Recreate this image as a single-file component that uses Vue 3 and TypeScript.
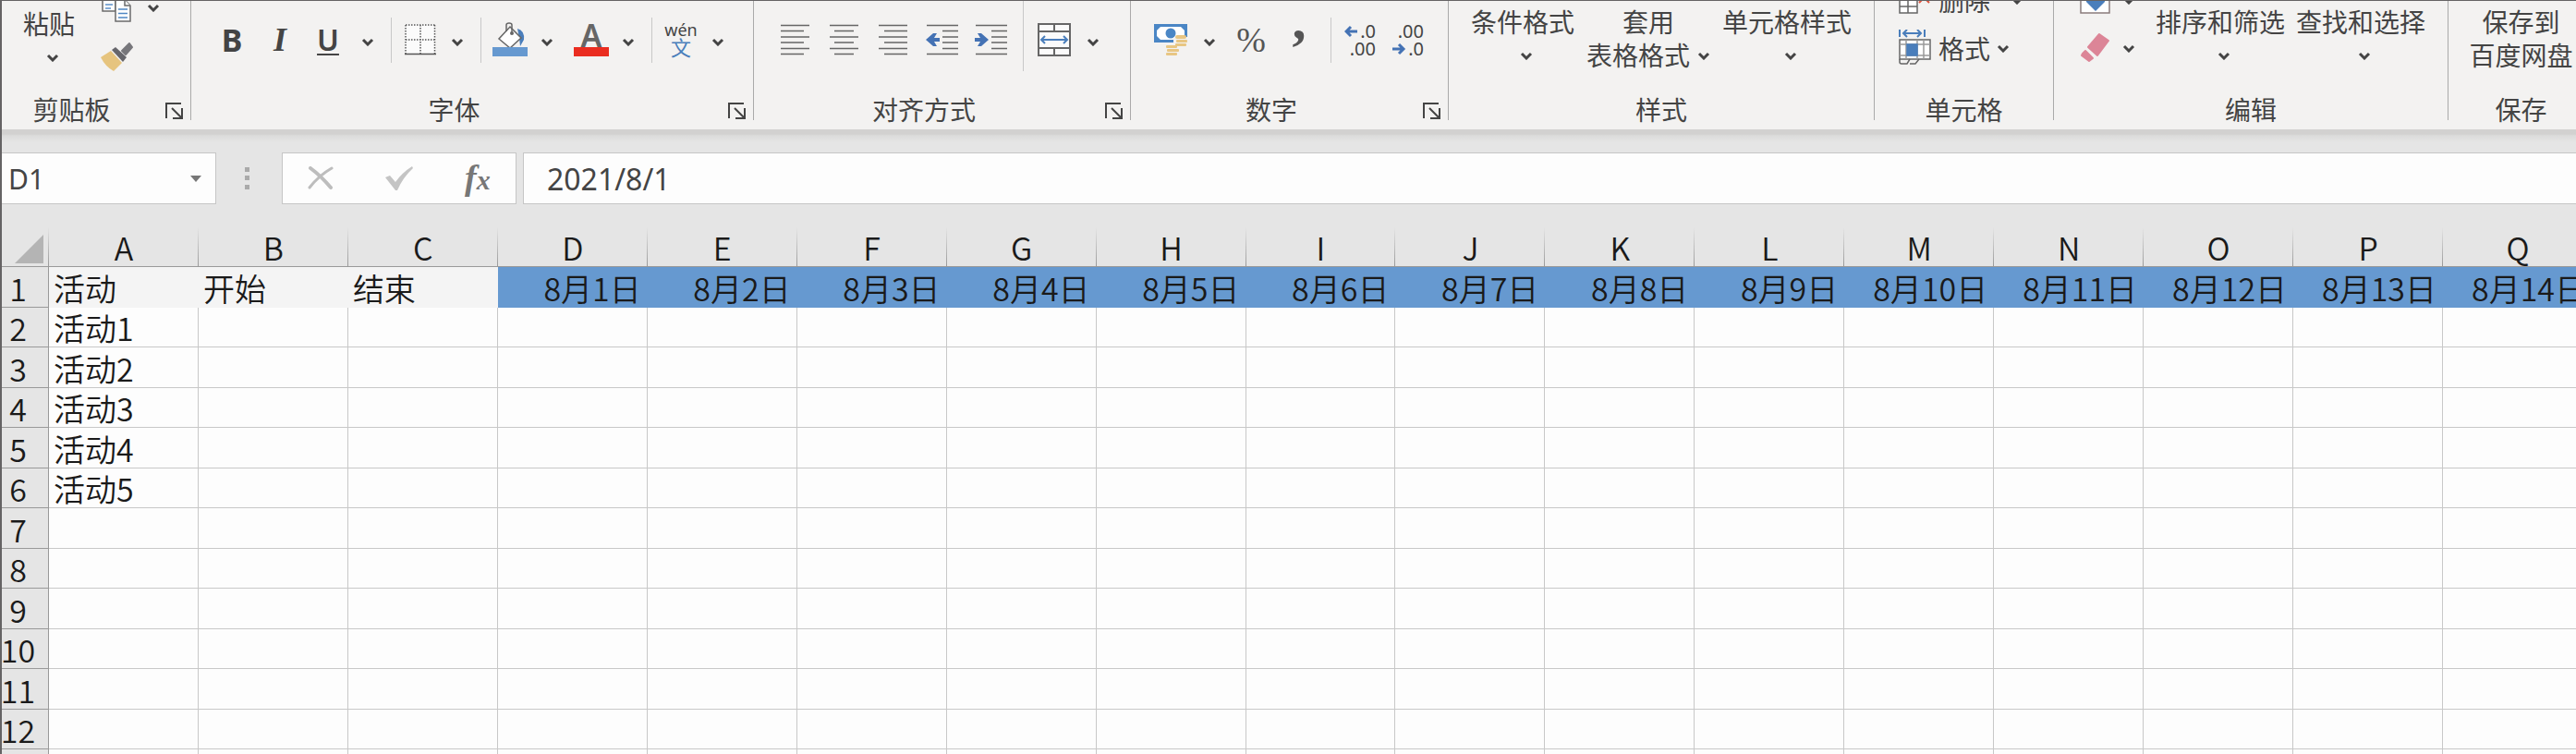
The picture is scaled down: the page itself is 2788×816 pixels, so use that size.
<script setup lang="ts">
import { ref } from 'vue'

const cellName = ref('D1')
const formula = ref('2021/8/1')

const columns: string[] = 'ABCDEFGHIJKLMNOPQ'.split('')
const headings: string[] = ['活动', '开始', '结束']
const rowCount = 13

const rows = Array.from({ length: rowCount }, (_, r) => ({
  number: r + 1,
  cells: columns.map((_, c) => {
    if (r === 0) return c < 3 ? headings[c] : `8月${c - 2}日`
    return c === 0 && r <= 5 ? `活动${r}` : ''
  }),
}))

const chevron = 'M2 2L7 7L12 2'
const lowChevron = 'M2 6L7 11L12 6'
const launcher = 'M1 18V2H17M7 7L17 17M18 7V18H8'

const alignIcons = [
  { label: '左对齐', d: 'M0 1.5H31M0 7.5H25M0 14H31M0 20H25M0 26.5H31M0 32.5H25' },
  { label: '居中', d: 'M0 1.5H31M5 7.5H26M0 14H31M5 20H26M0 26.5H31M5 32.5H26' },
  { label: '右对齐', d: 'M0 1.5H31M6 7.5H31M0 14H31M6 20H31M0 26.5H31M6 32.5H31' },
]
const indentLines = 'M1 1.5H35M18 7.5H35M18 14H35M18 20H35M18 26.5H35M1 32.5H35'
</script>

<template>
  <main class="app">
    <div class="ribbon">
      <section class="group">
        <div class="tools clipboard">
          <button class="big"><span>粘贴</span><svg class="chev" viewBox="0 0 14 9"><path :d="chevron" /></svg></button>
          <div class="stack">
            <div class="line">
              <button class="ico" aria-label="复制">
                <svg width="36" height="40" viewBox="0 0 36 40" fill="#fff" stroke="#6b6b6b" stroke-width="1.5">
                  <path d="M2 8H16V24H2Z" />
                  <path d="M5 17H13M5 21H11" stroke="#5b8fc9" />
                  <path d="M16 12H26L32 18V35H16Z" />
                  <path d="M26 12V18H32" />
                  <path d="M19 22H29M19 26.5H29M19 31H29" stroke="#4f87c4" />
                </svg>
              </button>
              <button class="drop" aria-label="复制选项"><svg class="chev" viewBox="0 0 14 9"><path :d="chevron" /></svg></button>
            </div>
            <div class="line">
              <button class="ico" aria-label="格式刷">
                <svg width="36" height="40" viewBox="0 0 36 40">
                  <path d="M0 22L11 15L23 28L14 37Q5 32 0 22Z" fill="#e6c47e" />
                  <path d="M12 14L16 11L28 22L24 27Z" fill="#66666b" />
                  <path d="M23 15L31 7L34 11L27 19Z" fill="#77777b" stroke="#77777b" stroke-width="2" stroke-linejoin="round" />
                </svg>
              </button>
            </div>
          </div>
        </div>
        <footer><span>剪贴板</span><button class="launch" aria-label="剪贴板设置"><svg viewBox="0 0 20 19"><path :d="launcher" /></svg></button></footer>
      </section>

      <section class="group">
        <div class="tools row font">
          <button class="slot bold">B</button>
          <button class="slot italic">I</button>
          <button class="slot under">U</button>
          <button class="drop" aria-label="下划线选项"><svg class="chev low" viewBox="0 0 14 13"><path :d="lowChevron" /></svg></button>
          <i class="sep"></i>
          <div class="split">
            <button class="ico" aria-label="边框">
              <svg width="34" height="34" viewBox="0 0 34 34" fill="none">
                <rect width="33" height="33" fill="#fbfbfb" />
                <path d="M1 1H33M1 17H33M1 1V32M17 1V32M32.5 1V32" stroke="#555" stroke-width="1.5" stroke-dasharray="1.5 1.5" />
                <path d="M0 32.5H34" stroke="#555" stroke-width="1.5" />
              </svg>
            </button>
            <button class="drop" aria-label="边框选项"><svg class="chev low" viewBox="0 0 14 13"><path :d="lowChevron" /></svg></button>
          </div>
          <i class="sep"></i>
          <div class="split">
            <button class="ico" aria-label="填充颜色">
              <svg width="38" height="38" viewBox="0 0 38 38">
                <path d="M27 7Q35 9 34 19L30 26L29 17Z" fill="#4a7ebb" />
                <path d="M19 5L31 17L19 28L7 18Z" fill="#fff" stroke="#666" stroke-width="1.5" />
                <path d="M15 10V3Q15 1 18 1Q21 1 21 3V11" fill="none" stroke="#666" stroke-width="1.5" />
                <circle cx="21" cy="12" r="2" fill="#666" />
                <rect y="27" width="38" height="10" fill="#6699d0" />
              </svg>
            </button>
            <button class="drop" aria-label="填充颜色选项"><svg class="chev low" viewBox="0 0 14 13"><path :d="lowChevron" /></svg></button>
          </div>
          <div class="split next">
            <button class="ico" aria-label="字体颜色">
              <svg width="38" height="38" viewBox="0 0 38 38">
                <text x="19" y="27" text-anchor="middle" class="letter">A</text>
                <rect y="27" width="38" height="10" fill="#ea2d20" />
              </svg>
            </button>
            <button class="drop" aria-label="字体颜色选项"><svg class="chev low" viewBox="0 0 14 13"><path :d="lowChevron" /></svg></button>
          </div>
          <i class="sep"></i>
          <div class="split">
            <button class="ico pinyin"><span>wén</span><b>文</b></button>
            <button class="drop" aria-label="拼音选项"><svg class="chev low" viewBox="0 0 14 13"><path :d="lowChevron" /></svg></button>
          </div>
        </div>
        <footer><span>字体</span><button class="launch" aria-label="字体设置"><svg viewBox="0 0 20 19"><path :d="launcher" /></svg></button></footer>
      </section>

      <section class="group">
        <div class="tools row align">
          <button v-for="a in alignIcons" :key="a.label" class="slot" :aria-label="a.label">
            <svg width="31" height="34" viewBox="0 0 31 34"><path :d="a.d" stroke="#666" stroke-width="1.5" /></svg>
          </button>
          <button class="slot" aria-label="减少缩进">
            <svg width="35" height="34" viewBox="0 0 35 34">
              <path :d="indentLines" stroke="#666" stroke-width="1.5" />
              <path d="M0 17L8 10H12L9 15H15V19H9L12 24H8Z" fill="#4472b4" />
            </svg>
          </button>
          <button class="slot" aria-label="增加缩进">
            <svg width="35" height="34" viewBox="0 0 35 34">
              <path :d="indentLines" stroke="#666" stroke-width="1.5" />
              <path d="M15 17L7 10H3L6 15H0V19H6L3 24H7Z" fill="#4472b4" />
            </svg>
          </button>
          <i class="sep tall"></i>
          <div class="split wide">
            <button class="ico" aria-label="合并后居中">
              <svg width="36" height="36" viewBox="0 0 36 36" fill="none" stroke="#666" stroke-width="2">
                <rect x="1" y="1" width="34" height="34" fill="#fbfbfb" />
                <path d="M1 9H35M1 27H35M18 1V9M18 27V35" />
                <path d="M4 18H32M8 14L4 18L8 22M28 14L32 18L28 22" stroke="#4a7ebb" />
              </svg>
            </button>
            <button class="drop" aria-label="合并选项"><svg class="chev low" viewBox="0 0 14 13"><path :d="lowChevron" /></svg></button>
          </div>
        </div>
        <footer><span>对齐方式</span><button class="launch" aria-label="对齐设置"><svg viewBox="0 0 20 19"><path :d="launcher" /></svg></button></footer>
      </section>

      <section class="group">
        <div class="tools row number">
          <div class="split wide">
            <button class="ico" aria-label="会计数字格式">
              <svg width="36" height="36" viewBox="0 0 36 36">
                <rect y="1" width="36" height="20" fill="#4a86c5" />
                <path d="M7 4H29L33 8V14L29 18H7L3 14V8Z" fill="#fff" />
                <circle cx="18" cy="11" r="5.5" fill="#4a86c5" />
                <path d="M21 15H36V29H27V35H12V23H21Z" fill="#f3f2f1" />
                <g fill="#e8c683">
                  <rect x="23" y="13" width="12" height="4" rx="2" /><rect x="24" y="18" width="12" height="3" rx="1" />
                  <rect x="23" y="22" width="12" height="3" rx="1" /><rect x="13" y="24" width="12" height="3" rx="1" />
                  <rect x="14" y="28" width="13" height="3" rx="1" /><rect x="13" y="32" width="12" height="3" rx="1" />
                </g>
              </svg>
            </button>
            <button class="drop" aria-label="货币选项"><svg class="chev low" viewBox="0 0 14 13"><path :d="lowChevron" /></svg></button>
          </div>
          <button class="slot percent">%</button>
          <button class="slot" aria-label="千位分隔样式">
            <svg width="20" height="30" viewBox="0 0 20 30"><text x="10" y="14" text-anchor="middle" class="comma">,</text></svg>
          </button>
          <i class="sep near"></i>
          <button class="slot digits">
            <span><svg width="15" height="14" viewBox="0 0 15 14"><path d="M14 7H3M7 2L2 7L7 12" /></svg>.0</span>
            <span>.00</span>
          </button>
          <button class="slot digits">
            <span>.00</span>
            <span><svg width="15" height="14" viewBox="0 0 15 14"><path d="M0 7H12M7 2L12 7L7 12" /></svg>.0</span>
          </button>
        </div>
        <footer><span>数字</span><button class="launch" aria-label="数字设置"><svg viewBox="0 0 20 19"><path :d="launcher" /></svg></button></footer>
      </section>

      <section class="group">
        <div class="tools styles">
          <button class="big"><span>条件格式</span><svg class="chev" viewBox="0 0 14 9"><path :d="chevron" /></svg></button>
          <button class="big"><span>套用</span><span class="inline">表格格式<svg class="chev" viewBox="0 0 14 9"><path :d="chevron" /></svg></span></button>
          <button class="big"><span>单元格样式</span><svg class="chev" viewBox="0 0 14 9"><path :d="chevron" /></svg></button>
        </div>
        <footer class="plain"><span>样式</span></footer>
      </section>

      <section class="group">
        <div class="tools cells">
          <div class="stack">
            <div class="line">
              <button class="text">
                <svg width="36" height="40" viewBox="0 0 36 40" fill="#fff" stroke="#666" stroke-width="1.5">
                  <path d="M1 14H20V34H1ZM1 27H20M10 14V34" />
                  <path d="M22 12L33 23M33 12L22 23" stroke="#e0553f" stroke-width="2" />
                </svg>删除
              </button>
              <button class="drop far" aria-label="删除选项"><svg class="chev" viewBox="0 0 14 9"><path :d="chevron" /></svg></button>
            </div>
            <div class="line">
              <button class="text">
                <svg width="36" height="40" viewBox="0 0 36 40" fill="none" stroke="#666" stroke-width="1.5">
                  <path d="M1 0V8M28 0V8M5 4H24M9 0L5 4L9 8M20 0L24 4L20 8" stroke="#4a7ebb" stroke-width="2" />
                  <rect x="1" y="11" width="33" height="21" fill="#fff" />
                  <path d="M1 32V35Q1 37 3 37H9L12 32M12 37H18L22 32" />
                  <path d="M8 11V32M20 11V32M27 11V32M1 16H34M1 28H34" stroke="#999" />
                  <rect x="9" y="16" width="11" height="12" fill="#4a7ebb" stroke="#4a7ebb" />
                </svg>格式<svg class="chev" viewBox="0 0 14 9"><path :d="chevron" /></svg>
              </button>
            </div>
          </div>
        </div>
        <footer class="plain"><span>单元格</span></footer>
      </section>

      <section class="group">
        <div class="tools edit">
          <div class="stack">
            <div class="line">
              <button class="ico" aria-label="填充">
                <svg width="36" height="40" viewBox="0 0 36 40">
                  <path d="M1 12H32V34H1Z" fill="#fff" stroke="#8a7c7c" stroke-width="1.5" />
                  <path d="M11 12H22V19H27V22L17 32L7 22V19H11Z" fill="#4a7ebb" />
                </svg>
              </button>
              <button class="drop" aria-label="填充选项"><svg class="chev" viewBox="0 0 14 9"><path :d="chevron" /></svg></button>
            </div>
            <div class="line">
              <button class="ico" aria-label="清除">
                <svg width="36" height="40" viewBox="0 0 36 40" fill="#dc8597" stroke="#dc8597" stroke-width="2" stroke-linejoin="round">
                  <path d="M9 19L21 5L31 12L19 28Z" />
                  <path d="M6 23L3 26L2 28L10 34L14 31Z" />
                </svg>
              </button>
              <button class="drop" aria-label="清除选项"><svg class="chev" viewBox="0 0 14 9"><path :d="chevron" /></svg></button>
            </div>
          </div>
          <button class="big"><span>排序和筛选</span><svg class="chev" viewBox="0 0 14 9"><path :d="chevron" /></svg></button>
          <button class="big"><span>查找和选择</span><svg class="chev" viewBox="0 0 14 9"><path :d="chevron" /></svg></button>
        </div>
        <footer class="plain"><span>编辑</span></footer>
      </section>

      <section class="group">
        <div class="tools save">
          <button class="big"><span>保存到</span><span>百度网盘</span></button>
        </div>
        <footer class="plain"><span>保存</span></footer>
      </section>
    </div>

    <div class="bar">
      <div class="name">
        <input v-model="cellName" aria-label="名称框" />
        <button aria-label="名称列表"><svg width="12" height="7" viewBox="0 0 12 7"><path d="M0 0H12L6 7Z" fill="#777" /></svg></button>
      </div>
      <svg class="dots" width="5" height="24" viewBox="0 0 5 24" fill="#aaa"><path d="M0 0H5V5H0ZM0 9H5V14H0ZM0 19H5V24H0Z" /></svg>
      <div class="entry">
        <button aria-label="取消"><svg width="28" height="26" viewBox="0 0 28 26" fill="none" stroke="#bdbdbd" stroke-linecap="round"><path d="M3 2Q14 10 25 23" stroke-width="4" /><path d="M26 2Q12 10 2 23" stroke-width="3" /></svg></button>
        <button aria-label="输入"><svg width="30" height="26" viewBox="0 0 30 26"><path d="M0 12L5 10L11 17Q18 7 29 0L30 2Q19 12 13 26H11Z" fill="#c4c4c4" /></svg></button>
        <button class="fx"><em>f</em><em>x</em></button>
      </div>
      <input v-model="formula" class="formula" aria-label="编辑栏" />
    </div>

    <table>
      <thead>
        <tr>
          <th class="corner"><svg width="31" height="31" viewBox="0 0 31 31"><path d="M31 0V31H0Z" fill="#b4b4b4" /></svg></th>
          <th v-for="c in columns" :key="c" scope="col">{{ c }}</th>
        </tr>
      </thead>
      <tbody>
        <tr v-for="row in rows" :key="row.number">
          <th scope="row">{{ row.number }}</th>
          <td v-for="(cell, i) in row.cells" :key="i" :class="{ title: row.number === 1 && i < 3, date: row.number === 1 && i >= 3 }">{{ cell }}</td>
        </tr>
      </tbody>
    </table>
  </main>
</template>

<style>
html,
body {
  margin: 0;
  height: 100%;
  overflow: hidden;
}
#app {
  height: 100%;
}
</style>

<style scoped>
.app {
  box-sizing: border-box;
  height: 100%;
  overflow: hidden;
  border-top: 1px solid #656364;
  border-left: 2px solid #656364;
  background: #e5e5e5;
  color: #444;
  font-family: 'Noto Sans', 'Noto Sans CJK SC', sans-serif;
}
button,
input {
  margin: 0;
  padding: 0;
  border: 0;
  background: none;
  color: inherit;
  font: inherit;
}
svg {
  display: block;
  flex: none;
}
.ribbon {
  display: grid;
  grid-template-columns: 219fr 609fr 408fr 344fr 461fr 194fr 427fr 158fr;
  margin: 0 -20px 0 -14px;
  padding-bottom: 10px;
  overflow: hidden;
  background: #f3f2f1;
  font-size: 28px;
}
.group {
  display: flex;
  flex-direction: column;
  min-width: 0;
  height: 129px;
  border-right: 1px solid #aaa;
}
.tools {
  display: flex;
  align-items: flex-start;
  height: 107px;
}
.tools.row {
  align-items: center;
  height: 84px;
  margin-bottom: 23px;
}
footer {
  display: flex;
  align-items: center;
  gap: 12px;
  height: 22px;
  padding-right: 7px;
  line-height: 22px;
}
footer.plain {
  padding-right: 0;
}
footer span {
  flex: 1;
  text-align: center;
  white-space: nowrap;
}
.launch svg {
  width: 20px;
  height: 19px;
  fill: none;
  stroke: #444;
  stroke-width: 2;
}
.chev {
  width: 14px;
  height: 9px;
  fill: none;
  stroke: #444;
  stroke-width: 3;
}
.chev.low {
  height: 13px;
}
.big {
  display: flex;
  flex-direction: column;
  align-items: center;
  padding-top: 5px;
  line-height: 36px;
  white-space: nowrap;
}
.big > .chev {
  margin: 14px 0 0 8px;
}
.inline {
  display: flex;
  align-items: center;
  gap: 8px;
}
.stack {
  display: flex;
  flex-direction: column;
  margin-top: -27px;
}
.line {
  display: flex;
  align-items: center;
  height: 52px;
}
.ico {
  display: flex;
  justify-content: center;
}
.drop {
  display: flex;
  justify-content: center;
  width: 34px;
}
.drop.far {
  margin-left: 12px;
}
.text {
  display: flex;
  align-items: center;
  gap: 7px;
  white-space: nowrap;
}
.clipboard {
  padding-left: 37px;
  gap: 28px;
}
.clipboard .big {
  padding-top: 7px;
}
.clipboard .stack {
  margin-top: -19px;
}
.clipboard .line {
  gap: 4px;
}
.slot {
  display: flex;
  align-items: center;
  justify-content: center;
  flex: none;
  width: 52px;
  line-height: 40px;
}
.font {
  padding-left: 18px;
}
.bold {
  font-size: 34px;
  font-weight: 700;
}
.italic {
  font: italic 700 36px/40px 'Liberation Serif', serif;
}
.under {
  font-size: 32px;
  font-weight: 600;
  text-decoration: underline 2px;
  text-underline-offset: 3px;
}
.sep {
  flex: none;
  width: 1px;
  height: 49px;
  margin: 0 11px 0 8px;
  background: #c8c8c8;
}
.sep.tall {
  align-self: flex-start;
  height: 76px;
}
.sep.near {
  margin-right: 5px;
}
.split {
  display: flex;
  align-items: center;
  gap: 3px;
}
.split .ico {
  width: 40px;
}
.split.wide .ico {
  width: 44px;
}
.split.next {
  margin-left: 11px;
}
.letter {
  font: 600 34px 'Noto Sans', sans-serif;
  fill: #666;
}
.pinyin {
  flex-direction: column;
  align-items: center;
  font-size: 18px;
  line-height: 16px;
}
.pinyin b {
  color: #4a7ebb;
  font-size: 22px;
  font-weight: 400;
  line-height: 22px;
}
.align {
  padding-left: 18px;
}
.align .slot {
  width: 53px;
}
.number {
  padding-left: 21px;
}
.percent {
  margin-left: 2px;
  color: #555;
  font-family: 'Liberation Serif', serif;
  font-size: 38px;
}
.comma {
  font: 700 60px 'Liberation Serif', serif;
  fill: #555;
}
.digits {
  flex-direction: column;
  align-items: center;
  font-size: 20px;
  line-height: 19px;
}
.digits span {
  display: flex;
  align-items: center;
  justify-content: flex-end;
  gap: 2px;
  width: 34px;
}
.digits path {
  fill: none;
  stroke: #4472b4;
  stroke-width: 3;
}
.styles {
  padding-left: 24px;
  gap: 13px;
}
.cells {
  padding-left: 26px;
}
.edit {
  padding-left: 28px;
  gap: 12px;
}
.save {
  justify-content: center;
}
.bar {
  display: flex;
  align-items: flex-start;
  padding-top: 25px;
  background: linear-gradient(#d2d1d0 0 5px, #dcdcdb 7px, #e5e5e5 14px);
  font-size: 30px;
}
.name,
.entry,
.formula {
  box-sizing: border-box;
  height: 56px;
  border: 1px solid #c6c6c6;
  background: #fdfdfd;
}
.name {
  display: flex;
  align-items: center;
  width: 232px;
  padding: 0 15px 0 7px;
  border-left: 0;
}
.name input {
  flex: 1;
  min-width: 0;
}
.dots {
  align-self: center;
  margin: 0 35px 0 31px;
}
.entry {
  display: flex;
  align-items: center;
  gap: 56px;
  width: 254px;
  padding-left: 27px;
}
.fx {
  display: flex;
  align-items: baseline;
  color: #777;
  font: italic 700 38px/40px 'Liberation Serif', serif;
}
.fx em:last-child {
  font-size: 30px;
}
.formula {
  flex: 1;
  min-width: 0;
  margin-left: 7px;
  padding-left: 25px;
  border-right: 0;
  font-size: 32px;
}
table {
  width: calc(100% + 32px);
  margin: 25px 0 0 -14px;
  border-spacing: 0;
  table-layout: fixed;
  background: #fdfdfd;
  color: #1a1a1a;
  font: 350 34px/38px 'Noto Sans CJK SC', sans-serif;
}
th,
td {
  box-sizing: border-box;
  height: 43px;
  padding: 0;
  font-weight: 350;
  white-space: nowrap;
}
tbody tr:nth-child(odd) > * {
  height: 44px;
}
thead th {
  padding-top: 2px;
  border-bottom: 1px solid #999;
  background: linear-gradient(#e5e5e5, #999) right / 1px 100% no-repeat #e5e5e5;
}
thead .corner {
  width: 65px;
}
.corner svg {
  margin: 2px 0 0 28px;
}
tbody th {
  padding: 2px 1px 0 0;
  border-right: 1px solid #999;
  border-bottom: 1px solid #999;
  background: #e5e5e5;
}
td {
  padding: 2px 6px 0 5px;
  border-right: 1px solid #c8c8c8;
  border-bottom: 1px solid #c8c8c8;
}
.title {
  border-color: #f4f4f4;
  background: #f4f4f4;
}
.date {
  border-color: #6699d0;
  background: #6699d0;
  text-align: right;
}
</style>
